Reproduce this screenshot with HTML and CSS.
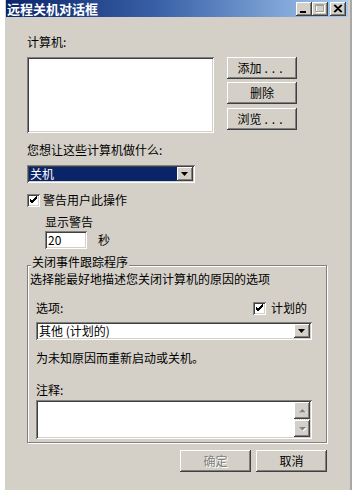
FILE: index.html
```html
<!DOCTYPE html>
<html lang="zh-CN">
<head>
<meta charset="utf-8">
<title>远程关机对话框</title>
<link rel="stylesheet" href="styles.css">
</head>
<body>
<div class="window">
  <div class="titlebar">
    <span class="title">远程关机对话框</span>
    <div class="tbtns">
      <span class="tbtn"><svg width="16" height="14" viewBox="0 0 16 14"><rect x="4" y="9" width="6" height="2" fill="#000"/></svg></span>
      <span class="tbtn"><svg width="16" height="14" viewBox="0 0 16 14"><path d="M4.5 3.5h8v7h-8z" fill="none" stroke="#fff"/><path d="M3.5 2.5h8v7h-8z M3.5 3.5h8" fill="none" stroke="#a0a0a0"/></svg></span>
      <span class="tbtn close"><svg width="16" height="14" viewBox="0 0 16 14"><path d="M4 3l7 7M5 3l7 7M11 3l-7 7M12 3l-7 7" stroke="#000" stroke-width="1.1"/></svg></span>
    </div>
  </div>

  <div class="content">
    <div class="label first">计算机:</div>
    <div class="listrow">
      <div class="listbox sunken"></div>
      <div class="btncol">
        <button class="btn">添加<span class="dots">...</span></button>
        <button class="btn b2">删除</button>
        <button class="btn b3">浏览<span class="dots">...</span></button>
      </div>
    </div>

    <div class="label what">您想让这些计算机做什么:</div>
    <div class="combo sunken c1">
      <span class="combo-text sel">关机</span>
      <span class="combo-btn"><svg width="7" height="4" viewBox="0 0 7 4"><path d="M0 0h7L3.5 4z" fill="#000"/></svg></span>
    </div>

    <div class="check-row warn">
      <span class="checkbox"><svg width="9" height="9" viewBox="0 0 9 9"><path d="M1 4l2 2 5-5M1 5l2 2 5-5M1 6l2 2 5-5" fill="none" stroke="#000" stroke-width="1"/></svg></span>
      <span>警告用户此操作</span>
    </div>
    <div class="label show">显示警告</div>
    <div class="secrow">
      <div class="input sunken">20</div>
      <span class="sec">秒</span>
    </div>

    <div class="group">
      <span class="legend">关闭事件跟踪程序</span>
      <div class="label desc">选择能最好地描述您关闭计算机的原因的选项</div>
      <div class="optrow">
        <span>选项:</span>
        <span class="check-row plan">
          <span class="checkbox"><svg width="9" height="9" viewBox="0 0 9 9"><path d="M1 4l2 2 5-5M1 5l2 2 5-5M1 6l2 2 5-5" fill="none" stroke="#000" stroke-width="1"/></svg></span>
          <span>计划的</span>
        </span>
      </div>
      <div class="combo sunken c2">
        <span class="combo-text">其他 (计划的)</span>
        <span class="combo-btn"><svg width="7" height="4" viewBox="0 0 7 4"><path d="M0 0h7L3.5 4z" fill="#000"/></svg></span>
      </div>
      <div class="label reason">为未知原因而重新启动或关机。</div>
      <div class="label note">注释:</div>
      <div class="textarea sunken">
        <div class="scroll">
          <span class="sbtn"><svg width="7" height="4" viewBox="0 0 7 4"><path d="M1 4h7L4.5 0.5z" fill="#fff"/><path d="M0 3.5h7L3.5 0z" fill="#808080"/></svg></span>
          <span class="track"></span>
          <span class="sbtn"><svg width="7" height="4" viewBox="0 0 7 4"><path d="M1 1h7L4.5 4.5z" fill="#fff"/><path d="M0 0h7L3.5 3.5z" fill="#808080"/></svg></span>
        </div>
      </div>
    </div>

    <div class="footer">
      <button class="btn wide disabled">确定</button>
      <button class="btn wide">取消</button>
    </div>
  </div>
</div>
</body>
</html>
```

FILE: styles.css
```css
* { box-sizing: border-box; }

body {
  margin: 0;
  background: #fff;
  font-family: "Noto Sans CJK SC", "Liberation Sans", sans-serif;
  font-size: 12px;
  color: #000;
}

.window {
  margin-left: 5px;
  width: 347px;
  height: 490px;
  background: #d4d0c8;
  border-right: 2px solid #a8a8a8;
  display: flex;
  flex-direction: column;
}

.titlebar {
  height: 17px;
  margin: 0 2px 0 1px;
  background: linear-gradient(to right, #0a246a, #3a62a8 45%, #a6caf0);
  display: flex;
  align-items: center;
  justify-content: space-between;
}

.title {
  color: #fff;
  font-weight: bold;
  font-size: 13px;
  line-height: 17px;
  padding-left: 1px;
}

.tbtns {
  display: flex;
  padding-right: 2px;
}

.tbtn {
  width: 16px;
  height: 14px;
  background: #d4d0c8;
  box-shadow: inset -1px -1px #404040, inset 1px 1px #fff, inset -2px -2px #808080;
  display: block;
}
.tbtn svg { display: block; }
.tbtn.close { margin-left: 2px; }

.content {
  padding: 0 23px 0 22px;
  display: flex;
  flex-direction: column;
}

.label {
  line-height: 14px;
  white-space: nowrap;
}
.label.first { margin-top: 18px; }

.sunken {
  background: #fff;
  box-shadow: inset 1px 1px #808080, inset -1px -1px #fff, inset 2px 2px #404040, inset -2px -2px #d4d0c8;
}

.listrow {
  display: flex;
  margin-top: 8px;
  align-items: flex-start;
}
.listbox {
  width: 187px;
  height: 76px;
}
.btncol {
  margin-left: 13px;
  display: flex;
  flex-direction: column;
}

.btn {
  width: 70px;
  height: 22px;
  padding: 0;
  border: 0;
  background: #d4d0c8;
  box-shadow: inset -1px -1px #404040, inset 1px 1px #fff, inset -2px -2px #808080;
  font-family: inherit;
  font-size: 12px;
  line-height: 14px;
  color: #000;
  text-align: center;
}
.btn.b2 { margin-top: 3px; }
.btn.b3 { margin-top: 4px; }
.dots { letter-spacing: 4px; padding-left: 3px; }

.label.what { margin-top: 10px; }

.combo {
  display: flex;
  height: 18px;
  padding: 2px;
}
.c1 { width: 168px; margin-top: 8px; }
.combo-text {
  flex: 1;
  line-height: 14px;
  padding-left: 1px;
  white-space: nowrap;
}
.combo-text.sel {
  background: #0a246a;
  color: #fff;
}
.combo-btn {
  width: 16px;
  height: 14px;
  background: #d4d0c8;
  box-shadow: inset -1px -1px #404040, inset 1px 1px #fff, inset -2px -2px #808080;
  display: flex;
  align-items: center;
  justify-content: center;
}
.combo-btn svg { display: block; margin-left: -1px; margin-top: -1px; }

.check-row {
  display: flex;
  align-items: center;
  line-height: 14px;
}
.check-row.warn { margin-top: 10px; }
.checkbox {
  width: 13px;
  height: 13px;
  margin-right: 3px;
  background: #fff;
  box-shadow: inset 1px 1px #808080, inset -1px -1px #fff, inset 2px 2px #404040, inset -2px -2px #d4d0c8;
  display: flex;
  align-items: center;
  justify-content: center;
}
.checkbox svg { display: block; margin-top: -1px; }

.label.show { margin-top: 8px; margin-left: 18px; }

.secrow {
  display: flex;
  align-items: center;
  margin-top: 2px;
  margin-left: 18px;
}
.input {
  width: 42px;
  height: 18px;
  line-height: 14px;
  padding: 2px 0 0 3px;
}
.sec { margin-left: 11px; line-height: 14px; }

.group {
  position: relative;
  width: 300px;
  margin-top: 16px;
  border: 1px solid #808080;
  box-shadow: inset 1px 1px #fff, 1px 1px #fff;
  padding: 6px 13px 3px 8px;
  display: flex;
  flex-direction: column;
}
.legend {
  position: absolute;
  top: -11px;
  left: 3px;
  padding: 0 1px;
  background: #d4d0c8;
  line-height: 13px;
}
.label.desc { margin-left: -6px; }

.optrow {
  display: flex;
  justify-content: space-between;
  align-items: center;
  line-height: 14px;
  margin-top: 15px;
  margin-right: 6px;
}
.check-row.plan .checkbox { margin-right: 5px; }

.c2 { width: 276px; margin-top: 7px; }
.c2 .combo-text { padding-left: 1px; }

.label.reason { margin-top: 11px; }
.label.note { margin-top: 18px; }

.textarea {
  width: 276px;
  height: 39px;
  margin-top: 3px;
  padding: 2px;
  display: flex;
  justify-content: flex-end;
}
.scroll {
  width: 16px;
  display: flex;
  flex-direction: column;
}
.sbtn {
  height: 17px;
  background: #d4d0c8;
  box-shadow: inset -1px -1px #404040, inset 1px 1px #fff, inset -2px -2px #808080;
  display: flex;
  align-items: center;
  justify-content: center;
}
.sbtn svg { display: block; overflow: visible; }
.track {
  height: 1px;
  background: repeating-linear-gradient(to right, #fff 0 1px, #d4d0c8 1px 2px);
}

.footer {
  display: flex;
  justify-content: flex-end;
  gap: 5px;
  margin-top: 7px;
}
.btn.wide { width: 71px; }
.btn.disabled {
  color: #808080;
  text-shadow: 1px 1px #fff;
}
```
